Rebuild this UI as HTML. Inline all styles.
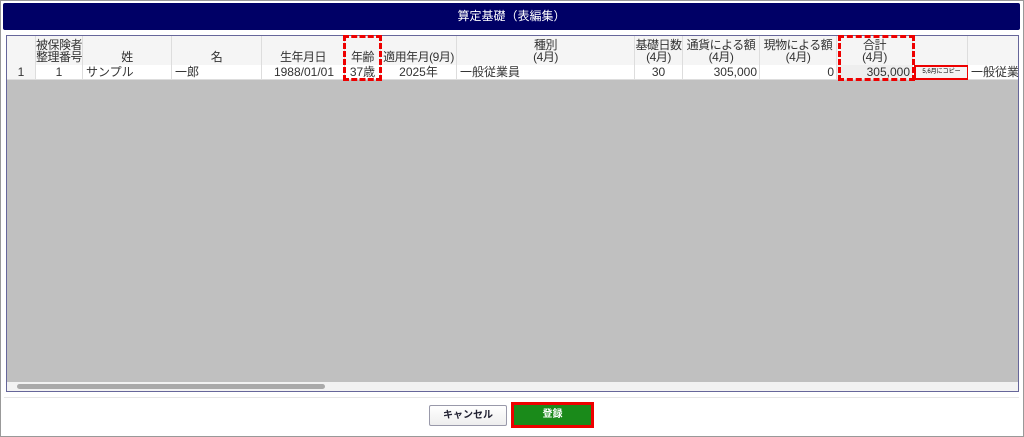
<!DOCTYPE html>
<html><head><meta charset="utf-8"><style>
*{box-sizing:border-box;margin:0;padding:0}
body{width:1024px;height:437px;background:#fff;font-family:"Liberation Sans","Noto Sans CJK JP",sans-serif;position:relative;overflow:hidden}
.frame{position:absolute;left:0;top:0;width:1024px;height:437px;border:1px solid #999}
.hdr{position:absolute;left:3px;top:3px;width:1017px;height:27px;background:#000066;border-radius:2px;color:#fff;font-size:12px;text-align:center;line-height:27px}
.grid{position:absolute;left:6px;top:35px;width:1013px;height:357px;border:1px solid #66669a;background:#c0c0c0;overflow:hidden}
.c{position:absolute;font-size:12px;color:#333;border-right:1px solid #ddd;white-space:nowrap}
.h{top:0;height:29px;background:#f5f5f5;text-align:center;line-height:12px;display:flex;flex-direction:column;justify-content:flex-end;align-items:center;padding-bottom:2px;overflow:visible;letter-spacing:-0.5px}
.r{top:29px;height:15px;background:#fff;line-height:15px;border-bottom:1px solid #ddd}
.rn{background:#f5f5f5}
.dash{position:absolute;border:3px dashed #e00}
.scroll{position:absolute;left:0;top:346px;width:1011px;height:10px;background:#f2f2f2}
.thumb{position:absolute;left:10px;top:2px;width:308px;height:5px;background:#aaa;border-radius:3px}
.sep{position:absolute;left:4px;top:397px;width:1015px;height:1px;background:#e6e6e6}
.cancel{position:absolute;left:429px;top:405px;width:78px;height:21px;border:1px solid #99a;border-radius:2px;background:linear-gradient(#fff,#eee);font-size:10px;font-weight:bold;color:#223;text-align:center;line-height:19px}
.reg{position:absolute;left:511px;top:402px;width:83px;height:26px;border:3px solid #e00;background:#1a8a1a;color:#fff;font-size:10px;font-weight:bold;text-align:center;line-height:20px}
</style></head><body>
<div class="frame"></div>
<div class="hdr">算定基礎（表編集）</div>
<div class="grid">
<div class="c h" style="left:0;width:29px"></div>
<div class="c h" style="left:29px;width:47px"><span>被保険者</span><span>整理番号</span></div>
<div class="c h" style="left:76px;width:89px">姓</div>
<div class="c h" style="left:165px;width:90px">名</div>
<div class="c h" style="left:255px;width:83px">生年月日</div>
<div class="c h" style="left:338px;width:36px">年齢</div>
<div class="c h" style="left:374px;width:76px">適用年月(9月)</div>
<div class="c h" style="left:450px;width:178px"><span>種別</span><span>(4月)</span></div>
<div class="c h" style="left:628px;width:48px"><span>基礎日数</span><span>(4月)</span></div>
<div class="c h" style="left:676px;width:77px"><span>通貨による額</span><span>(4月)</span></div>
<div class="c h" style="left:753px;width:77px"><span>現物による額</span><span>(4月)</span></div>
<div class="c h" style="left:830px;width:76px"><span>合計</span><span>(4月)</span></div>
<div class="c h" style="left:906px;width:55px"></div>
<div class="c h" style="left:961px;width:60px"></div>
<div class="c r rn" style="left:0;width:29px;text-align:center">1</div>
<div class="c r" style="left:29px;width:47px;text-align:center">1</div>
<div class="c r" style="left:76px;width:89px;padding-left:3px">サンプル</div>
<div class="c r" style="left:165px;width:90px;padding-left:3px">一郎</div>
<div class="c r" style="left:255px;width:83px;text-align:right;padding-right:10px">1988/01/01</div>
<div class="c r" style="left:338px;width:36px;text-align:center">37歳</div>
<div class="c r" style="left:374px;width:76px;text-align:center">2025年</div>
<div class="c r" style="left:450px;width:178px;padding-left:3px">一般従業員</div>
<div class="c r" style="left:628px;width:48px;text-align:center">30</div>
<div class="c r" style="left:676px;width:77px;text-align:right;padding-right:2px">305,000</div>
<div class="c r" style="left:753px;width:77px;text-align:right;padding-right:2px">0</div>
<div class="c r" style="left:830px;width:76px;text-align:right;padding-right:2px;background:#eee">305,000</div>
<div class="c r" style="left:906px;width:55px"><div style="position:absolute;left:1px;top:0;width:55px;height:15px;border:2px solid #e00;font-size:6px;line-height:11px;text-align:center;background:#f4f4f4;color:#000">5,6月にコピー</div></div>
<div class="c r" style="left:961px;width:60px;padding-left:3px;overflow:hidden">一般従業員</div>
<div class="scroll"><div class="thumb"></div></div>
</div>
<div class="dash" style="left:343px;top:35px;width:39px;height:46px"></div>
<div class="dash" style="left:838px;top:35px;width:77px;height:46px"></div>
<div class="sep"></div>
<div class="cancel">キャンセル</div>
<div class="reg">登録</div>
</body></html>
